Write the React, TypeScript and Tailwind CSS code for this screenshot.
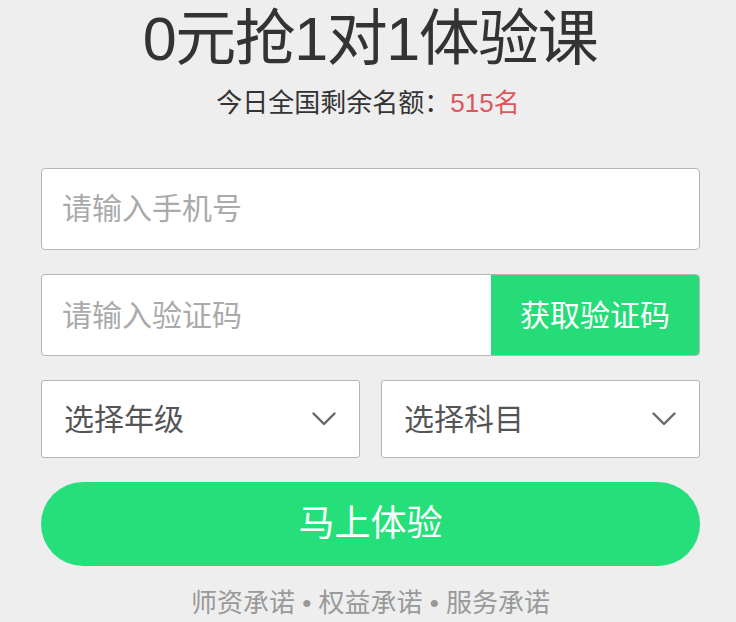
import { useState } from 'react';

const font = { fontFamily: '"Liberation Sans", Arial, "Noto Sans CJK SC", sans-serif' };

function Chevron() {
  return (
    <svg width="24" height="14" viewBox="0 0 24 14" fill="none" className="shrink-0">
      <path d="M1.5 1.5 L12 12 L22.5 1.5" stroke="#666666" strokeWidth="2.4" strokeLinecap="round" strokeLinejoin="round" />
    </svg>
  );
}

function SelectBox({ label }: { label: string }) {
  return (
    <div className="flex-1 h-[78px] bg-white border border-[#b5b5b5] rounded-[3px] flex items-center justify-between pl-[22px] pr-[23px]">
      <span className="text-[30px] text-[#555555]">{label}</span>
      <Chevron />
    </div>
  );
}

export default function App() {
  const [phone, setPhone] = useState('');
  const [code, setCode] = useState('');

  return (
    <div className="w-[736px] h-[622px] bg-[#eeeeee] overflow-hidden" style={font}>
      <div className="flex flex-col items-center pt-[2px]">
        <h1 className="text-[61px] leading-[74px] text-[#333333] font-normal tracking-[-1.5px] translate-x-[2px]">0元抢1对1体验课</h1>
        <p className="mt-[12px] text-[26px] leading-[30px] text-[#333333]">
          今日全国剩余名额：<span className="text-[#e0555b]">515名</span>
        </p>
      </div>

      <div className="ml-[41px] w-[659px] mt-[50px] flex flex-col">
        <input
          value={phone}
          onChange={(e) => setPhone(e.target.value)}
          placeholder="请输入手机号"
          className="h-[82px] bg-white border border-[#b5b5b5] rounded-[4px] px-[20px] text-[30px] text-[#333333] placeholder:text-[#aaaaaa] outline-none"
        />

        <div className="mt-[24px] h-[82px] flex bg-white border border-[#b5b5b5] rounded-[4px] overflow-hidden">
          <input
            value={code}
            onChange={(e) => setCode(e.target.value)}
            placeholder="请输入验证码"
            className="flex-1 min-w-0 px-[20px] text-[30px] text-[#333333] placeholder:text-[#aaaaaa] outline-none"
          />
          <button className="w-[208px] bg-[#25dc78] text-white text-[30px]">获取验证码</button>
        </div>

        <div className="mt-[24px] flex gap-[21px]">
          <SelectBox label="选择年级" />
          <SelectBox label="选择科目" />
        </div>

        <button className="mt-[24px] h-[84px] rounded-full bg-[#25e07a] text-white text-[36px]">马上体验</button>

        <p className="mt-[22px] text-center text-[26px] leading-[30px] text-[#999999]">
          师资承诺 • 权益承诺 • 服务承诺
        </p>
      </div>
    </div>
  );
}
